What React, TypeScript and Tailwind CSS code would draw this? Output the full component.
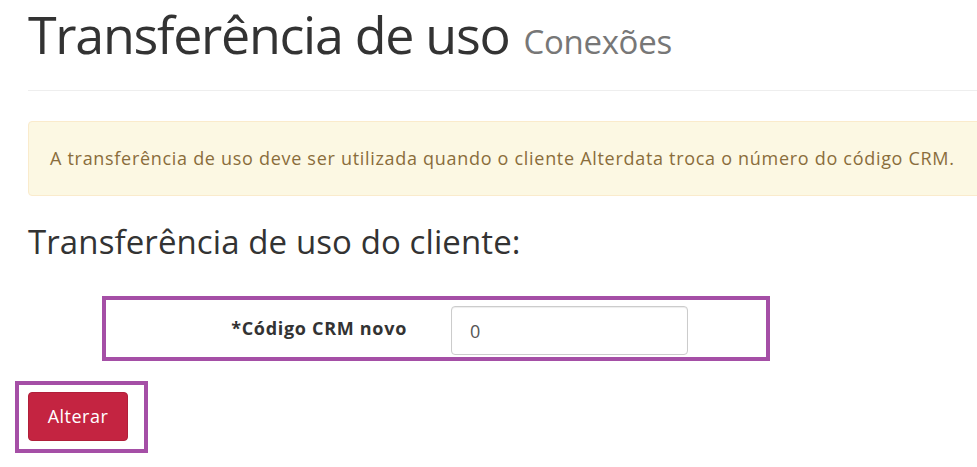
export default function App() {
  return (
    <div className="min-h-screen bg-white font-['Open_Sans',sans-serif] overflow-hidden">
      <div className="pl-[28px]">
        <div className="pb-[22px] border-b border-[#eeeeee] flex items-baseline gap-[14px] whitespace-nowrap">
          <h1 className="text-[52px] leading-[1.3] text-[#333333] tracking-[-1.3px]">Transferência de uso</h1>
          <span className="text-[33px] text-[#777777] tracking-[-0.3px]">Conexões</span>
        </div>

        <div className="mt-[30px] h-[75px] w-[1000px] flex items-center pl-[21px] bg-[#fcf8e3] border border-[#faebcc] rounded-[4px] text-[#8a6d3b] text-[18px] tracking-[0.7px] whitespace-nowrap">
          A transferência de uso deve ser utilizada quando o cliente Alterdata troca o número do código CRM.
        </div>

        <h2 className="mt-[25px] text-[33px] leading-[1.3] text-[#333333] tracking-[0.1px] whitespace-nowrap">Transferência de uso do cliente:</h2>

        <div className="mt-[33px] ml-[74px] w-[668px] h-[65px] border-4 border-[#a54fa6] flex items-center">
          <label className="w-[345px] text-right pr-[44px] text-[18px] tracking-[0.7px] font-bold text-[#333333]">*Código CRM novo</label>
          <input
            readOnly
            value="0"
            className="w-[237px] h-[49px] mt-[4px] px-[18px] border border-[#cccccc] rounded-[4px] text-[18px] text-[#555555] shadow-[inset_0_1px_1px_rgba(0,0,0,0.075)] outline-none"
          />
        </div>

        <div className="mt-[20px] -ml-[13px] w-[133px] h-[72px] border-4 border-[#a54fa6] pl-[9px] pt-[7px]">
          <button className="w-[100px] h-[49px] rounded-[4px] bg-[#c42441] border border-[#b01f3a] text-white text-[18px] tracking-[0.5px]">
            Alterar
          </button>
        </div>
      </div>
    </div>
  );
}
